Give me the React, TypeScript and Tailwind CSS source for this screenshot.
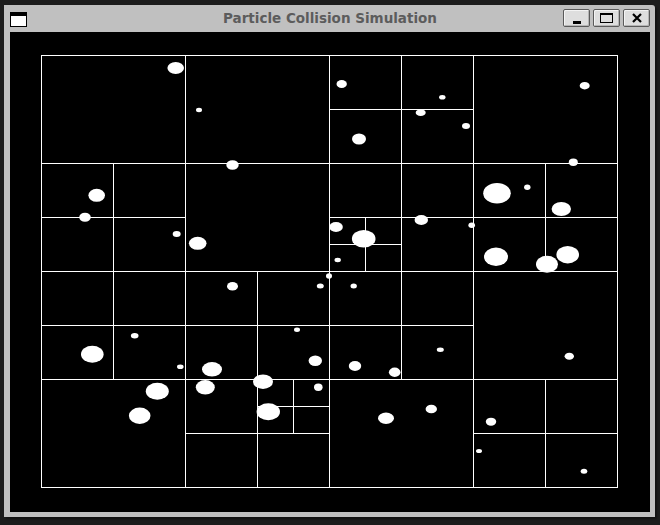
type QNode = { x: number; y: number; w: number; h: number; kids?: QNode[] }

// children are NW, NE, SW, SE; a given entry replaces the plain leaf at that spot
function split(x: number, y: number, w: number, h: number, sub: (QNode[] | null)[] = [null, null, null, null]): QNode {
  const hw = w / 2
  const hh = h / 2
  const spots = [
    [x, y],
    [x + hw, y],
    [x, y + hh],
    [x + hw, y + hh],
  ]
  return {
    x, y, w, h,
    kids: spots.map(([cx, cy], i) => {
      const s = sub[i]
      if (!s) return { x: cx, y: cy, w: hw, h: hh }
      return s[0]
    }),
  }
}

const leaf = (x: number, y: number, w: number, h: number): QNode => ({ x, y, w, h })

const tree: QNode = split(41, 55, 576, 432, [
  // NW quadrant
  [split(41, 55, 288, 216, [
    [leaf(41, 55, 144, 108)],
    [leaf(185, 55, 144, 108)],
    [split(41, 163, 144, 108)],
    [leaf(185, 163, 144, 108)],
  ])],
  // NE quadrant
  [split(329, 55, 288, 216, [
    [split(329, 55, 144, 108)],
    [leaf(473, 55, 144, 108)],
    [split(329, 163, 144, 108, [null, null, [split(329, 217, 72, 54)], null])],
    [split(473, 163, 144, 108)],
  ])],
  // SW quadrant
  [split(41, 271, 288, 216, [
    [split(41, 271, 144, 108)],
    [split(185, 271, 144, 108)],
    [leaf(41, 379, 144, 108)],
    [split(185, 379, 144, 108, [null, [split(257, 379, 72, 54)], null, null])],
  ])],
  // SE quadrant
  [split(329, 271, 288, 216, [
    [split(329, 271, 144, 108)],
    [leaf(473, 271, 144, 108)],
    [leaf(329, 379, 144, 108)],
    [split(473, 379, 144, 108)],
  ])],
])

function flatten(n: QNode, out: QNode[] = []) {
  out.push(n)
  n.kids?.forEach(k => flatten(k, out))
  return out
}

// [cx, cy, rx, ry]
const particles: [number, number, number, number][] = [
  [175.7, 68, 8.3, 6],
  [199, 110, 3, 2.2],
  [232.5, 165, 6.2, 4.8],
  [96.7, 195.3, 8.3, 6.5],
  [85, 217.3, 5.8, 4.5],
  [176.7, 234, 4, 3],
  [197.7, 243.3, 8.8, 6.5],
  [341.7, 84, 5.2, 4],
  [420.7, 112.7, 5, 3.3],
  [359, 139, 7, 5.5],
  [336, 227, 6.8, 5],
  [363.7, 238.7, 11.8, 8.8],
  [337.7, 260, 3.2, 2.2],
  [421.3, 220, 6.7, 5],
  [442.3, 97.3, 3.2, 2.3],
  [466, 126, 4, 3],
  [584.7, 85.7, 5, 3.7],
  [573.3, 162.3, 4.5, 3.7],
  [497, 193.3, 13.8, 10.3],
  [527.3, 187.3, 3.2, 2.7],
  [561.3, 209, 9.7, 7],
  [471.7, 225.3, 3.3, 2.7],
  [496, 256.7, 12, 9.2],
  [547, 264.2, 11, 8.5],
  [567.7, 254.7, 11.3, 8.7],
  [232.5, 286.3, 5.5, 4.3],
  [134.7, 335.7, 3.8, 2.7],
  [92.3, 354.3, 11.3, 8.5],
  [180.3, 366.7, 3.3, 2.3],
  [212, 369.3, 10, 7.3],
  [157.3, 391.3, 11.5, 8.5],
  [205.3, 387.3, 9.5, 7.2],
  [139.7, 415.7, 10.8, 8.2],
  [329, 276, 3, 2.8],
  [320.3, 286, 3.5, 2.5],
  [353.7, 286, 3.2, 2.5],
  [297, 329.7, 3, 2.2],
  [315.3, 360.7, 6.7, 5.2],
  [355, 366, 6.2, 5],
  [394.7, 372.3, 5.8, 4.7],
  [263, 381.7, 10, 7.2],
  [318.3, 387.3, 4.3, 3.7],
  [268.3, 411.7, 11.7, 8.5],
  [386, 418.3, 8, 5.7],
  [431.3, 409, 5.7, 4.3],
  [440.3, 349.7, 3.5, 2.2],
  [569.3, 356.3, 4.7, 3.5],
  [491, 421.7, 5.2, 4],
  [479, 451, 3, 2],
  [584, 471.3, 3.3, 2.5],
]

function WinButton({ children }: { children: React.ReactNode }) {
  return (
    <div className="w-[27px] h-[18px] bg-[#dedede] border border-[#5a5a5a] rounded-[2px] shadow-[inset_1px_1px_0_#f4f4f4,inset_-1px_-1px_0_#b4b4b4] flex items-center justify-center">
      {children}
    </div>
  )
}

export default function App() {
  const nodes = flatten(tree)
  return (
    <div className="w-[660px] h-[525px] bg-[#1c1c1c] pt-[5px] pl-[4px]">
      <div className="w-[651px] h-[512px] bg-[#c0c0c0] flex flex-col rounded-tr-[3px] shadow-[2px_2px_2px_rgba(0,0,0,0.35)]">
        {/* title bar */}
        <div className="h-[27px] grid grid-cols-[1fr_auto_1fr] items-center pl-[6px] pr-[5px]">
          <div className="w-[17px] h-[15px] border border-black border-t-[4px] bg-white mt-[1px]" />
          <div className="text-[13.5px] font-bold text-[#5c5c5c] font-['DejaVu_Sans',Verdana,sans-serif] leading-none">
            Particle Collision Simulation
          </div>
          <div className="flex gap-[3px] mt-[-1px] justify-self-end">
            <WinButton>
              <div className="w-[8px] h-[3px] bg-black mt-[8px]" />
            </WinButton>
            <WinButton>
              <div className="w-[13px] h-[10px] border border-black border-t-[2px]" />
            </WinButton>
            <WinButton>
              <svg width="10" height="10" viewBox="0 0 10 10">
                <path d="M1 1 L9 9 M9 1 L1 9" stroke="black" strokeWidth="2.2" />
              </svg>
            </WinButton>
          </div>
        </div>
        {/* canvas */}
        <div className="px-[6px]">
          <div className="w-[640px] h-[480px] bg-black">
            <svg width="640" height="480" viewBox="10 32 640 480">
              <g fill="none" stroke="white" strokeWidth="1" shapeRendering="crispEdges">
                {nodes.map((n, i) => (
                  <rect key={i} x={n.x + 0.5} y={n.y + 0.5} width={n.w} height={n.h} />
                ))}
              </g>
              <g fill="white">
                {particles.map(([cx, cy, rx, ry], i) => (
                  <ellipse key={i} cx={cx} cy={cy} rx={rx} ry={ry} />
                ))}
              </g>
            </svg>
          </div>
        </div>
      </div>
    </div>
  )
}
